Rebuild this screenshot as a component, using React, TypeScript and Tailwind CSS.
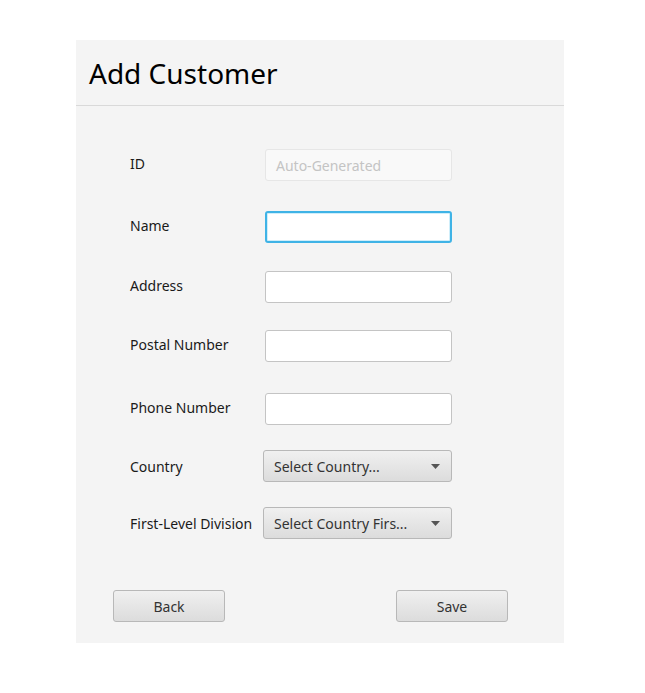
import React from 'react';

const font = { fontFamily: '"Noto Sans", "Open Sans", sans-serif' };

function Row({ label, top, lift, children }: { label: string; top: string; lift?: boolean; children: React.ReactNode }) {
  return (
    <div className={`flex items-center h-[32px] ${top}`}>
      <span
        className={`w-[187px] pl-[54px] shrink-0 whitespace-nowrap text-[14px] text-[#1a1a1a] ${lift ? 'mb-[3px]' : ''}`}
      >
        {label}
      </span>
      {children}
    </div>
  );
}

function TextField({ focused }: { focused?: boolean }) {
  return (
    <div
      className={
        focused
          ? 'w-[187px] h-[32px] ml-[2px] rounded-[3px] bg-white border-2 border-[#3fb3e6] shadow-[inset_0_0_0_1px_#cfeefa]'
          : 'w-[187px] h-[32px] ml-[2px] rounded-[3px] bg-white border border-[#c4c4c4]'
      }
    />
  );
}

function Combo({ text }: { text: string }) {
  return (
    <div className="w-[189px] h-[32px] rounded-[3px] border border-[#b8b8b8] bg-gradient-to-b from-[#f0f0f0] to-[#dcdcdc] flex items-center pl-[10px] pr-[11px]">
      <span className="flex-1 text-[14px] text-[#333333]">{text}</span>
      <svg width="9" height="5" viewBox="0 0 9 5">
        <path d="M0 0h9L4.5 5z" fill="#555555" />
      </svg>
    </div>
  );
}

function Btn({ label }: { label: string }) {
  return (
    <button className="w-[112px] h-[32px] rounded-[3px] border border-[#b8b8b8] bg-gradient-to-b from-[#f0f0f0] to-[#dcdcdc] text-[14px] text-[#333333]">
      {label}
    </button>
  );
}

export default function App() {
  return (
    <div className="w-[645px] h-[693px] bg-white pt-[40px] pl-[76px]" style={font}>
      <div className="w-[488px] h-[603px] bg-[#f4f4f4] flex flex-col">
        <div className="h-[66px] border-b border-[#d9d9d9] flex items-center pl-[13px] pt-[1px]">
          <h1 className="text-[28px] text-black">Add Customer</h1>
        </div>

        <Row label="ID" top="mt-[43px]" lift>
          <div className="w-[187px] h-[32px] ml-[2px] rounded-[3px] bg-[#f9f9f9] border border-[#e6e6e6] flex items-center pl-[10px] text-[14px] text-[#c4c4c4]">
            Auto-Generated
          </div>
        </Row>
        <Row label="Name" top="mt-[30px]" lift>
          <TextField focused />
        </Row>
        <Row label="Address" top="mt-[28px]" lift>
          <TextField />
        </Row>
        <Row label="Postal Number" top="mt-[27px]" lift>
          <TextField />
        </Row>
        <Row label="Phone Number" top="mt-[31px]" lift>
          <TextField />
        </Row>
        <Row label="Country" top="mt-[25px]">
          <Combo text="Select Country..." />
        </Row>
        <Row label="First-Level Division" top="mt-[25px]">
          <Combo text="Select Country Firs..." />
        </Row>

        <div className="flex mt-[51px] pl-[37px] gap-[171px]">
          <Btn label="Back" />
          <Btn label="Save" />
        </div>
      </div>
    </div>
  );
}
